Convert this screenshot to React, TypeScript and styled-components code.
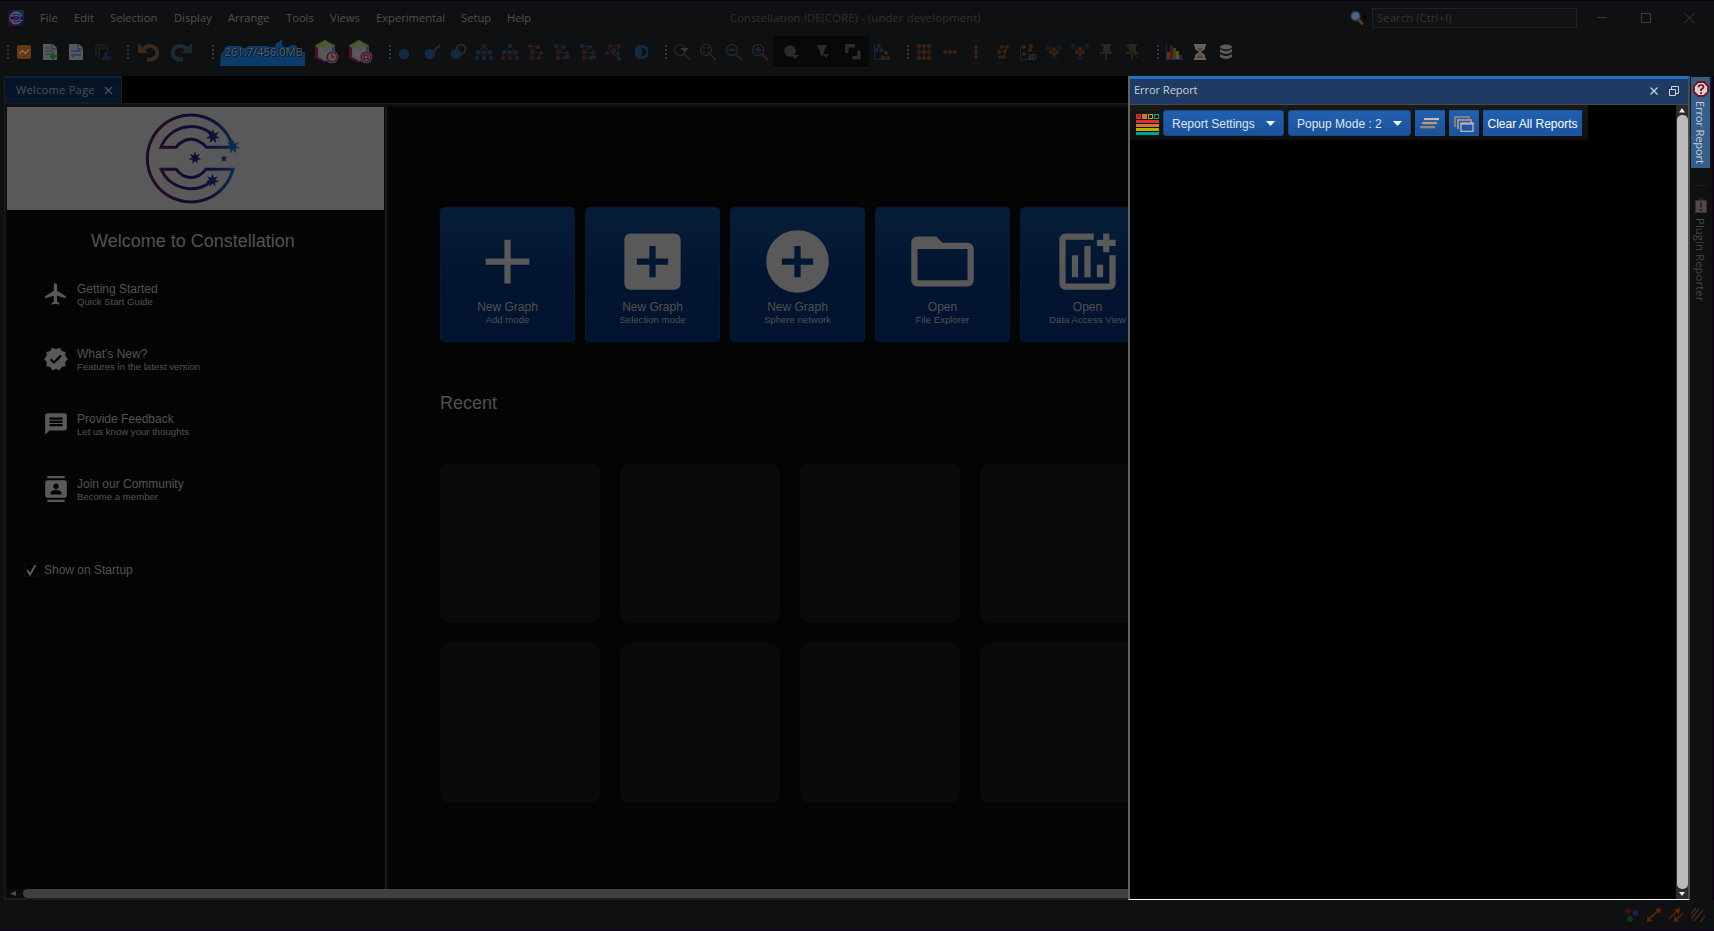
import React from "react";
import styled, { createGlobalStyle, css } from "styled-components";

const ui = css`
  font-family: "Open Sans", "Noto Sans", sans-serif;
  font-size: 11.2px;
  line-height: 16px;
  white-space: nowrap;
`;
const arial = `"Liberation Sans", Arial, sans-serif`;

const Global = createGlobalStyle`
  * { box-sizing: border-box; }
  body { margin: 0; background: #0e1011; overflow: hidden; }
`;

const Window = styled.div`
  width: 1714px;
  height: 931px;
  display: flex;
  flex-direction: column;
  background: #0e1011;
  border-top: 1px solid #0f0118;
  border-bottom: 1px solid #0d0118;
  overflow: hidden;
`;

const MenuBar = styled.header`
  height: 34px;
  flex: none;
  display: flex;
  align-items: center;
  padding-left: 8px;
  color: #505050;
  ${ui}
`;
const AppLogo = styled.svg`
  width: 16px;
  height: 16px;
  margin-right: 8px;
`;
const MenuItem = styled.span<{ $w: number }>`
  width: ${(p) => p.$w + 16}px;
  padding-left: 8px;
`;
const Title = styled.span`
  width: 620px;
  margin-left: 190px;
  color: #2f3031;
  letter-spacing: 0.16px;
`;
const SearchBox = styled.div`
  width: 205px;
  height: 20px;
  margin-left: 4px;
  padding: 1px 4px;
  border: 1px solid #1f2122;
  background: #101213;
  color: #343637;
  letter-spacing: 0.12px;
`;
const WindowButtons = styled.svg`
  width: 110px;
  height: 20px;
  margin-left: 12px;
`;

const Toolbar = styled.div`
  height: 41px;
  flex: none;
  display: flex;
  align-items: flex-start;
  padding-top: 1px;
`;
const Slot = styled.div<{ $w?: number; $dark?: boolean; $pull?: number }>`
  width: ${(p) => p.$w ?? 26}px;
  height: 32px;
  margin-right: ${(p) => -(p.$pull ?? 0)}px;
  display: flex;
  align-items: center;
  justify-content: center;
  flex: none;
  ${(p) => p.$dark && "background:#070808;border-bottom:1px solid #131514;"}
  & > svg { width: 24px; height: 24px; flex: none; overflow: visible; }
`;
const Memory = styled.div`
  position: relative;
  width: 87px;
  height: 26px;
  margin: 4px 6px 0 0;
  flex: none;
  display: flex;
  align-items: center;
  justify-content: center;
  color: #55616b;
  ${ui}
  & svg { position: absolute; inset: 0; }
  & span { position: relative; top: -1px; text-shadow: 1px 1px 0 #0a1520, -1px 0 0 #0a1520; }
`;

const Body = styled.div`
  display: flex;
  height: 824px;
  flex: none;
  padding-left: 4px;
`;
const Editor = styled.main`
  width: 1124px;
  height: 824px;
  overflow: hidden;
  display: flex;
  flex-direction: column;
`;
const TabStrip = styled.div`
  height: 27px;
  flex: none;
  background: #000;
  display: flex;
`;
const Tab = styled.div`
  width: 118px;
  height: 27px;
  border-top: 2px solid #05243d;
  border-left: 1px solid #1c1e20;
  border-right: 1px solid #1c1e20;
  background: linear-gradient(#071223, #05182d);
  padding: 4px 8px 0 11px;
  display: flex;
  justify-content: space-between;
  color: #4c4f53;
  ${ui}
  letter-spacing: 0.2px;
  & svg { margin-top: 4px; }
`;
const EditorFrame = styled.div`
  height: 797px;
  border: solid #1c1c1d;
  border-width: 1px 0 2px 1px;
  background: #101011;
  padding: 3px 0 0 2px;
  display: flex;
  flex-direction: column;
`;
const Columns = styled.div`
  display: flex;
  height: 782px;
  flex: none;
`;
const Welcome = styled.section`
  width: 377px;
  background: #040404;
  font-family: ${arial};
  color: #535353;
  flex: none;
`;
const Banner = styled.div`
  height: 103px;
  width: 377px;
  background: #595959;
  & svg { display: block; }
`;
const WelcomeHeading = styled.h1`
  margin: 20px 0 0;
  padding-right: 5px;
  font-weight: 400;
  font-size: 18px;
  line-height: 22px;
  text-align: center;
`;
const Links = styled.div`
  margin-top: 30px;
  padding-left: 36px;
`;
const Link = styled.div`
  height: 65px;
  display: flex;
  align-items: flex-start;
  gap: 8px;
  & > svg { width: 26px; height: 26px; margin-top: -1px; fill: #595959; overflow: visible; }
`;
const Name = styled.div`
  font-family: ${arial};
  font-size: 12px;
  line-height: 14px;
`;
const Detail = styled.div`
  font-family: ${arial};
  font-size: 9.6px;
  line-height: 11px;
  white-space: nowrap;
`;
const Startup = styled.label`
  display: flex;
  align-items: center;
  gap: 6px;
  margin: 20px 0 0 17px;
  font-size: 12px;
  line-height: 16px;
`;
const Divider = styled.div`
  width: 5px;
  background: linear-gradient(90deg, #0a0a0a 20%, #191919 20% 60%, #060606 60%);
  flex: none;
`;
const Start = styled.section`
  width: 740px;
  background: #040404;
  padding: 100px 0 0 51px;
  overflow: hidden;
  font-family: ${arial};
  color: #515151;
`;
const Actions = styled.div`
  display: flex;
  gap: 10px;
  width: 720px;
`;
const Action = styled.div`
  width: 135px;
  height: 135px;
  flex: none;
  border-radius: 4px;
  border: 1px solid #041a35;
  background: linear-gradient(#061d38, #02142f 60%, #02132f);
  padding-top: 16px;
  display: flex;
  flex-direction: column;
  align-items: center;
  & > svg { width: 75px; height: 75px; fill: #595959; margin-bottom: 1px; flex: none; }
`;
const RecentHeading = styled.h2`
  margin: 50px 0 49px;
  font-weight: 400;
  font-size: 18px;
  line-height: 22px;
`;
const RecentGrid = styled.div`
  display: grid;
  grid-template-columns: repeat(4, 160px);
  gap: 20px;
  width: 720px;
`;
const RecentTile = styled.div`
  height: 160px;
  border-radius: 9px;
  background: #0a0a0a;
`;
const HScroll = styled.div`
  height: 9px;
  display: flex;
  align-items: center;
  background: #0b0b0b;
  & svg { width: 16px; height: 9px; flex: none; }
`;
const HThumb = styled.div`
  flex: 1;
  height: 9px;
  border-radius: 5px 0 0 5px;
  background: #404040;
`;

const Panel = styled.aside`
  width: 562px;
  height: 824px;
  flex: none;
  border-left: 2px solid #626262;
  border-right: 2px solid #4c4c4c;
  border-bottom: 1px solid #fff;
  background: #000;
  display: flex;
  flex-direction: column;
`;
const PanelHeader = styled.div`
  height: 29px;
  flex: none;
  border-top: 3px solid #2172c8;
  border-bottom: 1px solid #4a4a4a;
  background: #1f3b63;
  display: flex;
  justify-content: space-between;
  padding: 3px 8px 0 4px;
  color: #c9ced5;
  ${ui}
  letter-spacing: -0.12px;
`;
const PanelBody = styled.div`
  flex: 1;
  display: flex;
  justify-content: space-between;
`;
const ReportBar = styled.div`
  width: 458px;
  height: 35px;
  padding: 5px 5px 0 5px;
  display: flex;
  gap: 4px;
  background: linear-gradient(#191919, #0e0e0e);
`;
const ReportIcon = styled.svg`
  width: 24px;
  height: 26px;
`;
const Button = styled.button<{ $w: number; $menu?: boolean }>`
  width: ${(p) => p.$w}px;
  height: 26px;
  flex: none;
  border: 1px solid ${(p) => (p.$menu ? "#1a487f" : "#1b59a6")};
  border-radius: ${(p) => (p.$menu ? 3 : 0)}px;
  background: linear-gradient(#2160b0, #1b539c);
  padding: 1px ${(p) => (p.$menu ? 8 : 0)}px 0;
  display: flex;
  align-items: center;
  justify-content: ${(p) => (p.$menu ? "space-between" : "center")};
  color: ${(p) => (p.$menu ? "#dfe6ef" : "#fff")};
  font-family: ${arial};
  font-size: 12px;
  white-space: nowrap;
`;
const VScroll = styled.div`
  width: 12px;
  background: #2b2b2b;
  display: flex;
  flex-direction: column;
  align-items: center;
`;
const VThumb = styled.div`
  flex: 1;
  width: 11px;
  border-radius: 5px;
  background: #bababa;
`;

const Side = styled.nav`
  width: 24px;
  display: flex;
  flex-direction: column;
  align-items: center;
  padding: 1px 2px 0 1px;
  border-right: 2px solid #0f0118;
`;
const SideTab = styled.div<{ $active?: boolean }>`
  width: 19px;
  height: ${(p) => (p.$active ? 91 : 116)}px;
  padding-top: ${(p) => (p.$active ? 4 : 12)}px;
  display: flex;
  flex-direction: column;
  align-items: center;
  gap: ${(p) => (p.$active ? 4 : 5)}px;
  background: ${(p) => (p.$active ? "#345d8a" : "transparent")};
  color: ${(p) => (p.$active ? "#c8cdd3" : "#464748")};
  ${ui}
  letter-spacing: ${(p) => (p.$active ? -0.18 : 0.15)}px;
  & span { writing-mode: vertical-rl; line-height: 17px; }
`;
const SideGap = styled.div`
  width: 16px;
  height: 18px;
  border-bottom: 1px solid #1a1c1d;
`;
const StatusBar = styled.footer`
  height: 30px;
  display: flex;
  justify-content: flex-end;
  padding: 6px 7px 0 0;
`;

type Pt = [number, number];
/** Small node-link glyph on a 24px grid. */
const Net = ({ pts, lines = [], cols, lc = "#2a2122", r = 2 }: { pts: Pt[]; lines?: [number, number][]; cols: string; lc?: string; r?: number }) => {
  const pal: Record<string, string> = { r: "#37181b", b: "#12283e", o: "#3c2110" };
  return (
    <svg viewBox="0 0 24 24">
      {lines.map(([a, b], i) => (
        <path key={i} d={`M${pts[a][0]} ${pts[a][1]}L${pts[b][0]} ${pts[b][1]}`} stroke={lc} />
      ))}
      {pts.map(([x, y], i) => (
        <circle key={i} cx={x} cy={y} r={r} fill={pal[cols[i] ?? cols[0]]} />
      ))}
    </svg>
  );
};
const Handle = ({ w = 26, pull = 0 }: { w?: number; pull?: number }) => (
  <Slot $w={w} $pull={pull}>
    <svg viewBox="0 0 24 24">
      {[5, 9, 13, 17].map((y) => <rect key={y} x="11" y={y} width="2" height="2" fill="#37393a" />)}
    </svg>
  </Slot>
);

const TREE: Pt[] = [[12, 6], [6, 12], [12, 12], [18, 12], [5, 18], [12, 18], [19, 18]];
const TREE_L: [number, number][] = [[0, 1], [0, 3], [1, 4], [2, 5], [3, 6], [1, 2], [2, 3], [2, 4], [2, 6]];
const ZIG: Pt[] = [[6, 6], [14, 7], [8, 12], [17, 13], [8, 18], [15, 18]];
const ZIG_L: [number, number][] = [[0, 1], [0, 2], [1, 2], [2, 3], [2, 4], [3, 5], [4, 5]];

const Doc = ({ children }: { children: React.ReactNode }) => (
  <svg viewBox="0 0 24 24">
    <path d="M5 4h10l4 4v12H5z" fill="#555a61" />
    <path d="M14 4v5h5" fill="none" stroke="#25303c" />
    {children}
  </svg>
);
const Cube = ({ square }: { square?: boolean }) => (
  <svg viewBox="0 0 24 24">
    <path d="M12 0l10 5v12l-10 5-10-5V5z" fill="#123f70" />
    <path d="M2 5l10 5v13L2 18z" fill="#4d1022" />
    <path d="M2 6l10-6 10 6-10 6z" fill="#4e5a16" />
    <path d="M5 8l8-4 6 4v9l-7 4-7-4z" fill="#545456" />
    <path d="M5 8l7 4 7-4v9l-7 4z" fill="#626264" opacity=".45" />
    <circle cx="19" cy="17" r="6.3" fill="#5a5759" />
    <circle cx="19" cy="17" r="4.8" fill="none" stroke="#551326" strokeWidth="1.6" />
    {square ? <rect x="17" y="15" width="4" height="4" fill="none" stroke="#551326" strokeWidth="1.4" /> : <path d="M19 14v3h2.5" fill="none" stroke="#551326" strokeWidth="1.3" />}
  </svg>
);
const Undo = ({ c, flip }: { c: string; flip?: boolean }) => (
  <svg viewBox="0 0 24 24">
    <g transform={flip ? "translate(24 0) scale(-1 1)" : undefined} fill="none" stroke={c}>
      <path d="M6 10Q10 5.500 15 6A6.300 6.300 0 0 1 14 19.500H11" strokeWidth="4" />
      <path d="M2 3v10h10z" fill={c} stroke="none" />
    </g>
  </svg>
);
const Zoom = ({ children }: { children?: React.ReactNode }) => (
  <svg viewBox="0 0 24 24" fill="none">
    <circle cx="10" cy="10" r="5.5" stroke="#2b2d2f" strokeWidth="1.2" />
    <path d="M14 14l6 6" stroke="#3c1a1c" strokeWidth="2" />
    {children}
  </svg>
);
const Pin = ({ off }: { off?: boolean }) => (
  <svg viewBox="0 0 24 24">
    <path d="M7 4h10v2h-1v6h2v2h-5v6h-2v-6H6v-2h3V6H7z" fill="#25281c" />
    {off && <path d="M5 5l13 13" stroke="#361519" strokeWidth="1.3" />}
  </svg>
);
const Converge = ({ out }: { out?: boolean }) => (
  <svg viewBox="0 0 24 24">
    <g stroke="#131f33" strokeWidth="1.6" fill="none">
      {out ? <path d="M4 9V5h4M4 5l4 4M20 9V5h-4M20 5l-4 4M12 15v5M9 17l3 3 3-3" /> : <path d="M4 9h4V5M4 5l4 4M20 9h-4V5M20 5l-4 4M12 20v-4M9 18l3-3 3 3" />}
    </g>
    <g fill="#40230f">
      {[[9, 12], [15, 12], [12, 9], [12, 14]].map(([x, y], i) => <circle key={i} cx={x} cy={y} r="1.9" />)}
    </g>
  </svg>
);

const star = (cx: number, cy: number, r: number, n = 7) =>
  Array.from({ length: n * 2 }, (_, i) => {
    const a = (Math.PI * i) / n - Math.PI / 2;
    const q = i % 2 ? r * 0.45 : r;
    return `${(cx + q * Math.cos(a)).toFixed(2)},${(cy + q * Math.sin(a)).toFixed(2)}`;
  }).join(" ");

const Emblem = () => (
  <svg width="377" height="103" viewBox="7.5 107 377 103">
    <defs>
      <linearGradient id="em" gradientUnits="userSpaceOnUse" x1="147" y1="0" x2="238" y2="0">
        <stop offset="0" stopColor="#1c0c24" />
        <stop offset=".16" stopColor="#270b24" />
        <stop offset=".42" stopColor="#100d2c" />
        <stop offset=".72" stopColor="#0f1138" />
        <stop offset="1" stopColor="#0c3152" />
      </linearGradient>
    </defs>
    <g fill="none" stroke="url(#em)" strokeWidth="3">
      <path d="M233 146A43.5 43.5 0 1 0 233.5 169.2H206.5Q200 177.6 191.5 177.6T176.5 169.2H161.5A32.5 32.5 0 0 0 211 182" />
      <path d="M233 147.3H207Q200 139.2 191.5 139.2T176.5 147.3H161.5A32.5 32.5 0 0 1 213 134.5" />
    </g>
    <g fill="url(#em)">
      <polygon points={star(213.5, 136.5, 7.5)} />
      <polygon points={star(233.5, 146.5, 7.5)} />
      <polygon points={star(195.5, 158, 6.5)} />
      <polygon points={star(224.5, 158.7, 3.8, 5)} />
      <polygon points={star(213, 180.5, 7)} />
    </g>
  </svg>
);

const links = [
  ["Getting Started", "Quick Start Guide", "M21 16v-2l-8-5V3.5c0-.83-.67-1.5-1.5-1.5S10 2.67 10 3.5V9l-8 5v2l8-2.5V19l-2 1.5V22l3.5-1 3.5 1v-1.5L13 19v-5.5l8 2.5z"],
  ["What's New?", "Features in the latest version", "M23 12l-2.44-2.79.34-3.69-3.61-.82-1.89-3.2L12 2.96 8.6 1.5 6.71 4.69 3.1 5.5l.34 3.7L1 12l2.44 2.79-.34 3.7 3.61.82L8.6 22.5l3.4-1.47 3.4 1.46 1.89-3.19 3.61-.82-.34-3.69L23 12zm-12.91 4.72l-3.8-3.81 1.48-1.48 2.32 2.33 5.85-5.87 1.48 1.48-7.33 7.35z"],
  ["Provide Feedback", "Let us know your thoughts", "M20 2H4c-1.1 0-1.99.9-1.99 2L2 22l4-4h14c1.1 0 2-.9 2-2V4c0-1.1-.9-2-2-2zm-2 12H6v-2h12v2zm0-3H6V9h12v2zm0-3H6V6h12v2z"],
  ["Join our Community", "Become a member", "M20 4H4c-1.1 0-2 .9-2 2v12c0 1.1.9 2 2 2h16c1.1 0 2-.9 2-2V6c0-1.1-.9-2-2-2zM4 0h16v2H4zm0 22h16v2H4zm8-15c1.38 0 2.5 1.12 2.5 2.5S13.38 12 12 12s-2.5-1.12-2.5-2.5S10.620 7 12 7zm5 10H7v-1.5c0-1.67 3.330-2.5 5-2.5s5 .83 5 2.500V17z"],
];
const actions = [
  ["New Graph", "Add mode", "M19 13h-6v6h-2v-6H5v-2h6V5h2v6h6v2z"],
  ["New Graph", "Selection mode", "M19 3H5c-1.11 0-2 .9-2 2v14c0 1.100.89 2 2 2h14c1.100 0 2-.9 2-2V5c0-1.100-.9-2-2-2zm-2 10h-4v4h-2v-4H7v-2h4V7h2v4h4v2z"],
  ["New Graph", "Sphere network", "M12 2C6.480 2 2 6.480 2 12s4.480 10 10 10 10-4.480 10-10S17.520 2 12 2zm5 11h-4v4h-2v-4H7v-2h4V7h2v4h4v2z"],
  ["Open", "File Explorer", "M20 6h-8l-2-2H4c-1.100 0-1.990.9-1.990 2L2 18c0 1.100.9 2 2 2h16c1.100 0 2-.9 2-2V8c0-1.100-.9-2-2-2zm0 12H4V8h16v10z"],
  ["Open", "Data Access View", "M21 7h-2v2h-2V7h-2V5h2V3h2v2h2zM19 19H5V5h9V3H5c-1.100 0-2 .9-2 2v14c0 1.100.9 2 2 2h14c1.100 0 2-.9 2-2V10h-2v9zm-4-6v4h2v-4h-2zm-4 4h2V7h-2v10zm-2 0v-7H7v7h2z"],
];
const menus: [string, number][] = [["File", 18], ["Edit", 20], ["Selection", 48], ["Display", 38], ["Arrange", 42], ["Tools", 28], ["Views", 30], ["Experimental", 69], ["Setup", 30], ["Help", 25]];

export default function App() {
  return (
    <Window>
      <Global />
      <MenuBar>
        <AppLogo viewBox="0 0 16 16">
          <defs>
            <linearGradient id="lg" x1="0" y1="1" x2="1" y2="0">
              <stop offset="0" stopColor="#3a0a35" /><stop offset=".5" stopColor="#15123c" /><stop offset="1" stopColor="#063a66" />
            </linearGradient>
          </defs>
          <rect width="16" height="16" rx="2" fill="url(#lg)" />
          <g fill="none" stroke="#6a6a72" strokeWidth="1">
            <path d="M13.500 6A6 6 0 1 0 13.500 10H10Q8 12 6 10H3.500M13.500 6H10Q8 4.500 6 6H3.500A5 5 0 0 1 11 4M3.500 10A5 5 0 0 0 11 12M7 8h2M11 8h1" />
          </g>
        </AppLogo>
        {menus.map(([m, w]) => <MenuItem key={m} $w={w}>{m}</MenuItem>)}
        <Title>Constellation IDE(CORE) - (under development)</Title>
        <svg width="18" height="16" viewBox="0 0 18 16">
          <path d="M8 9l4 4.500" stroke="#5e3c10" strokeWidth="3" strokeLinecap="round" />
          <circle cx="5.500" cy="6" r="4.500" fill="#536375" stroke="#1b3d66" strokeWidth="1.300" />
          <path d="M12 6h5l-2.500 3z" fill="#000" />
        </svg>
        <SearchBox>Search (Ctrl+I)</SearchBox>
        <WindowButtons viewBox="0 0 110 20" fill="none" stroke="#3b3d3e">
          <path d="M8 9.500h10M52.500 5.500h9v9h-9zM95.500 5l10 10M105.500 5l-10 10" />
        </WindowButtons>
      </MenuBar>

      <Toolbar>
        <Handle w={15} />
        <Slot $w={18}><svg viewBox="0 0 24 24"><rect x="5" y="5" width="14" height="14" rx="1.500" fill="#69380c" /><path d="M7 14l3.500-3.500 3 3L17 9.500" fill="none" stroke="#76716b" strokeWidth="1.500" /></svg></Slot>
        <Slot $w={34}><Doc><path d="M7 8h5M7 11h9M7 14h6" stroke="#33373c" /><path d="M20 16h-6M16 13l-3 3 3 3.500" stroke="#124a1a" strokeWidth="2" fill="none" /></Doc></Slot>
        <Slot $w={18}><Doc><path d="M7 11h9l-2-2.500M17 15H8l2 2.500" stroke="#283a63" strokeWidth="1.500" fill="none" /></Doc></Slot>
        <Slot $w={34}><svg viewBox="0 0 24 24" fill="none"><path d="M6 16V5h9M9 18V8h9v4" stroke="#1e2022" strokeWidth="1.500" /><circle cx="16" cy="14" r="2" fill="#10243a" /><path d="M11 20q0-4 5-4t5 4z" fill="#10243a" /></svg></Slot>
        <Handle w={18} />
        <Slot $w={22}><Undo c="#3c2a1a" /></Slot>
        <Slot $w={46}><Undo c="#1c2a34" flip /></Slot>
        <Handle w={15} />
        <Memory>
          <svg width="87" height="26"><path d="M0 26L1 14l3-3 1-4 2 0 1-1h12l3 2 3 0 2-2h18l4 1h5l1-4 3-1 2-2h1v6l3 1h5V6l2-1h3l2 2v3l3 3 2-1 3 0v14z" fill="#0c3c69" /></svg>
          <span>261.7/456.0MB</span>
        </Memory>
        <Slot $w={23}><Cube /></Slot>
        <Slot $w={46}><Cube square /></Slot>
        <Handle w={16} pull={8} />
        <Slot $w={28}><svg viewBox="0 0 24 24"><circle cx="12" cy="14" r="5.300" fill="#112941" /></svg></Slot>
        <Slot $w={28}><svg viewBox="0 0 24 24"><path d="M12 13l8-8" stroke="#3a2412" strokeWidth="2" /><circle cx="10" cy="14" r="5.300" fill="#112941" /></svg></Slot>
        <Slot $w={24}><svg viewBox="0 0 24 24"><circle cx="15" cy="9" r="4.500" stroke="#3a2412" strokeWidth="2" fill="none" /><circle cx="10" cy="14" r="5.300" fill="#112941" /></svg></Slot>
        <Slot $w={28}><Net pts={TREE} lines={TREE_L} cols="rbbbbbb" /></Slot>
        <Slot $w={24}><Net pts={TREE} lines={TREE_L} cols="bbbbrrr" /></Slot>
        <Slot $w={28}><Net pts={ZIG} lines={ZIG_L} cols="r" /></Slot>
        <Slot $w={24}><Net pts={[...ZIG, [18, 17]]} lines={ZIG_L} cols="bbrrrrb" /></Slot>
        <Slot $w={28}><Net pts={[...ZIG, [18, 17]]} lines={ZIG_L} cols="bbrrrbb" /></Slot>
        <Slot $w={24}><Net pts={[[8, 6], [17, 6], [12, 10], [5, 13], [16, 14], [11, 13], [17, 19]]} lines={[[0, 1], [0, 3], [3, 2], [1, 4], [5, 6], [4, 6], [2, 4]]} cols="rrbrbrb" /></Slot>
        <Slot $w={30}><svg viewBox="0 0 24 24"><path d="M9 5h7l3 3v8l-3 3H9l-3-3V8z" fill="#112941" /><path d="M13 8a4 4 0 0 1 0 8z" fill="#0e1011" /></svg></Slot>
        <Handle w={20} pull={6} />
        <Slot $w={24}><Zoom><path d="M10 8h9l-4.500 4z" fill="#35383a" /></Zoom></Slot>
        <Slot $w={28}><Zoom><path d="M7.500 9V7.500H9M11 7.500h1.500V9M12.500 11v1.500H11M9 12.500H7.500V11" stroke="#1c2230" strokeWidth="1.500" /></Zoom></Slot>
        <Slot $w={24}><Zoom><path d="M7 10h6" stroke="#182746" strokeWidth="1.800" /></Zoom></Slot>
        <Slot $w={28} $pull={1}><Zoom><path d="M7 10h6M10 7v6" stroke="#182746" strokeWidth="1.800" /></Zoom></Slot>
        <Slot $w={33} $dark><svg viewBox="0 0 24 24" fill="#2a2c2c"><circle cx="12" cy="11" r="5.800" /><path d="M13 15h8l-4 4z" /></svg></Slot>
        <Slot $w={31} $dark><svg viewBox="0 0 24 24" fill="#2a2c2c"><path d="M7 5h10l-5 12zM13 14h6l-3 4z" /></svg></Slot>
        <Slot $w={32} $dark><svg viewBox="0 0 24 24" fill="none" stroke="#2a2c2c" strokeWidth="3.500"><path d="M5.800 13V5.800H14M18 10.500v7.200h-6.500" /></svg></Slot>
        <Slot><svg viewBox="0 0 24 24"><path d="M4.500 5v14.500H20" stroke="#15243b" fill="none" /><g fill="#11293f"><circle cx="9" cy="6" r="2" /><circle cx="6.500" cy="10" r="2" /><circle cx="11.500" cy="10" r="2" /></g><g fill="#40230f"><circle cx="16" cy="13" r="2" /><circle cx="13" cy="17.500" r="2" /><circle cx="18" cy="17.500" r="2" /></g></svg></Slot>
        <Handle pull={10} />
        <Slot><Net r={2.1} lc="#40230f" cols="o" lines={[[0, 2], [3, 5], [6, 8], [0, 6], [1, 7], [2, 8]]} pts={[[7, 6], [12, 6], [17, 6], [7, 12], [12, 12], [17, 12], [7, 18], [12, 18], [17, 18]]} /></Slot>
        <Slot><Net lc="#40230f" cols="o" lines={[[0, 2]]} pts={[[7, 12], [12, 12], [17, 12]]} /></Slot>
        <Slot><Net lc="#40230f" cols="o" lines={[[0, 2]]} pts={[[12, 7], [12, 12], [12, 17]]} /></Slot>
        <Slot><Net lc="#40230f" cols="o" lines={[[0, 1], [2, 3], [4, 5], [1, 5]]} pts={[[12, 7], [17, 7], [9, 12], [15, 11], [10, 17], [14, 17]]} /></Slot>
        <Slot><svg viewBox="0 0 24 24"><path d="M4.500 5v14.500H20" stroke="#1a2638" fill="none" /><g fill="#40230f"><circle cx="8" cy="7" r="2" /><circle cx="15" cy="6" r="2" /><circle cx="8" cy="14" r="2" /><circle cx="14" cy="10" r="2" /></g><text x="12" y="18.500" fontSize="6.500" fontWeight="700" fontFamily="Liberation Sans" fill="#34383a">3D</text></svg></Slot>
        <Slot><Converge /></Slot>
        <Slot><Converge out /></Slot>
        <Slot><Pin /></Slot>
        <Slot><Pin off /></Slot>
        <Handle pull={10} />
        <Slot><svg viewBox="-5 0 24 24" shapeRendering="crispEdges"><path d="M0 12h3v7H0z" fill="#5c350d" /><path d="M3 6h3v13H3z" fill="#541426" /><path d="M6 8h3v11H6z" fill="#2f4a19" /><path d="M9 11h3v8H9z" fill="#5a5314" /><path d="M12 15h3v4h-3z" fill="#3a1f50" /><path d="M-.500 4v15.500h16" fill="none" stroke="#102a5c" /></svg></Slot>
        <Slot><svg viewBox="0 0 24 24"><path d="M6 4h12v2h-1v3l-4 3 4 3v3h1v2H6v-2h1v-3l4-3-4-3V6H6z" fill="#62636a" /><path d="M9 8h6l-3 3.500zM8.500 18l3.500-4 3.500 4z" fill="#6b3b12" /></svg></Slot>
        <Slot><svg viewBox="0 0 24 24" fill="#5a5b5c"><ellipse cx="12" cy="7" rx="6" ry="2.500" /><path d="M6 9q6 4 12 0v3q-6 4-12 0zM6 14q6 4 12 0v3q-6 4-12 0z" /></svg></Slot>
      </Toolbar>

      <Body>
        <Editor>
          <TabStrip>
            <Tab>Welcome Page<svg width="9" height="9" stroke="#4f5357" strokeWidth="1.300"><path d="M1 1l7 7M8 1L1 8" /></svg></Tab>
          </TabStrip>
          <EditorFrame>
            <Columns>
              <Welcome>
                <Banner><Emblem /></Banner>
                <WelcomeHeading>Welcome to Constellation</WelcomeHeading>
                <Links>
                  {links.map(([n, d, p]) => (
                    <Link key={n}>
                      <svg viewBox="0 0 24 24"><path fillRule="evenodd" d={p} /></svg>
                      <div><Name>{n}</Name><Detail>{d}</Detail></div>
                    </Link>
                  ))}
                </Links>
                <Startup>
                  <svg width="14" height="14"><rect x=".5" y=".5" width="13" height="13" fill="#020202" stroke="#0c0c0c" /><path d="M3 7l3 4.500L11.500 2" fill="none" stroke="#5e5e5e" strokeWidth="1.800" /></svg>
                  Show on Startup
                </Startup>
              </Welcome>
              <Divider />
              <Start>
                <Actions>
                  {actions.map(([n, d, p]) => (
                    <Action key={d}>
                      <svg viewBox="0 0 24 24"><path d={p} /></svg>
                      <Name>{n}</Name><Detail>{d}</Detail>
                    </Action>
                  ))}
                </Actions>
                <RecentHeading>Recent</RecentHeading>
                <RecentGrid>{Array.from({ length: 8 }, (_, i) => <RecentTile key={i} />)}</RecentGrid>
              </Start>
            </Columns>
            <HScroll>
              <svg viewBox="0 0 16 9"><path d="M3 4.500L9 2v5z" fill="#4a4a4a" /></svg>
              <HThumb />
            </HScroll>
          </EditorFrame>
        </Editor>

        <Panel>
          <PanelHeader>
            Error Report
            <svg width="31" height="16" fill="none" stroke="#ced4db">
              <path d="M1.500 5.500l7 7M8.500 5.500l-7 7" strokeWidth="1.200" />
              <path d="M20.500 7.500h6v6h-6zM22.500 7V4.500h7v7H27" />
            </svg>
          </PanelHeader>
          <PanelBody>
            <ReportBar>
              <ReportIcon viewBox="0 0 24 26" shapeRendering="crispEdges">
                <rect x="1.500" y="4.500" width="4" height="4" fill="#b52a2a" stroke="#dc3030" /><rect x="7.500" y="4.500" width="4" height="4" fill="#c07030" stroke="#d98030" />
                <rect x="13.500" y="4.500" width="4" height="4" fill="none" stroke="#b8b000" /><rect x="19.500" y="4.500" width="4" height="4" fill="none" stroke="#00a8a0" />
                <path d="M1 10h23v3H1z" fill="#d9302b" /><path d="M1 14h23v3H1z" fill="#d07a30" /><path d="M1 18h23v3H1z" fill="#b8b000" /><path d="M1 22h23v3H1z" fill="#00a09c" />
              </ReportIcon>
              <Button $w={121} $menu>Report Settings<svg width="9" height="6"><path d="M0 0h9L4.500 5z" fill="#fff" /></svg></Button>
              <Button $w={123} $menu>Popup Mode : 2<svg width="9" height="6"><path d="M0 0h9L4.500 5z" fill="#fff" /></svg></Button>
              <Button $w={30}>
                <svg width="20" height="12" shapeRendering="crispEdges"><path d="M4 0h15v2H4z" fill="#c4bebb" /><path d="M2 4h15v2H2z" fill="#a5a09e" /><path d="M0 8h15v2H0z" fill="#8f8a88" /><path d="M4 2h15v1H4zM2 6h15v1H2zM0 10h15v1H0z" fill="#5f5f62" /></svg>
              </Button>
              <Button $w={30}>
                <svg width="20" height="16" fill="none"><path d="M1 11V1h14v3" stroke="#858080" strokeWidth="2" /><path d="M4 13V4h13v3" stroke="#99938f" strokeWidth="2" /><path d="M7 7.500h12v8H7z" fill="#1d57a3" stroke="#b9b6b2" strokeWidth="1.400" /><path d="M6.500 7.500h13" stroke="#b9b6b2" strokeWidth="2" /></svg>
              </Button>
              <Button $w={99}>Clear All Reports</Button>
            </ReportBar>
            <VScroll>
              <svg width="12" height="10"><path d="M6 3l3 4.500H3z" fill="#e8e8e8" /></svg>
              <VThumb />
              <svg width="12" height="10"><path d="M3 3h6L6 7z" fill="#e8e8e8" /></svg>
            </VScroll>
          </PanelBody>
        </Panel>

        <Side>
          <SideTab $active>
            <svg width="16" height="16" viewBox="0 0 16 16"><path d="M5 1h6l4 4v6l-4 4H5l-4-4V5z" fill="#d9cdd0" stroke="#7c1119" strokeWidth="1.800" /><path d="M5.500 6.200Q5.500 4 8 4t2.500 2Q10.500 7.500 8 8.500V10M8 11.200v1.800" stroke="#6c1018" strokeWidth="1.700" fill="none" /></svg>
            <span>Error Report</span>
          </SideTab>
          <SideGap />
          <SideTab>
            <svg width="12" height="15" viewBox="0 0 12 15"><path d="M4 3q0-2.500 2-2.500T8 3" fill="none" stroke="#333" /><rect x=".5" y="2.500" width="11" height="12" fill="#4b4b4b" stroke="#44301f" /><path d="M6 4.500v5M6 11v2" stroke="#56121b" strokeWidth="2" /></svg>
            <span>Plugin Reporter</span>
          </SideTab>
        </Side>
      </Body>

      <StatusBar>
        <svg width="84" height="20" viewBox="1622 906 84 20" fill="none">
          <circle cx="1627" cy="911" r="3" fill="#3c1114" /><circle cx="1634.500" cy="913" r="3" fill="#1d204a" /><circle cx="1629" cy="919" r="3" fill="#123614" />
          <g stroke="#5a2406" strokeWidth="1.700">
            <path d="M1648 919l10-9" /><path d="M1668 919l8-8M1674 921l8-8" />
            <path d="M1690 919l8-10M1693 921l9-11M1699 922l5-6M1690 914l5-6" stroke="#4a2a16" strokeWidth="1.300" />
          </g>
          <path d="M1660 908l-6 1 5 5zM1645.500 922l6-1-5-5zM1679 908l-6 1.500 5 5zM1673 922l.500-6 5 5z" fill="#5a2406" />
        </svg>
      </StatusBar>
    </Window>
  );
}
